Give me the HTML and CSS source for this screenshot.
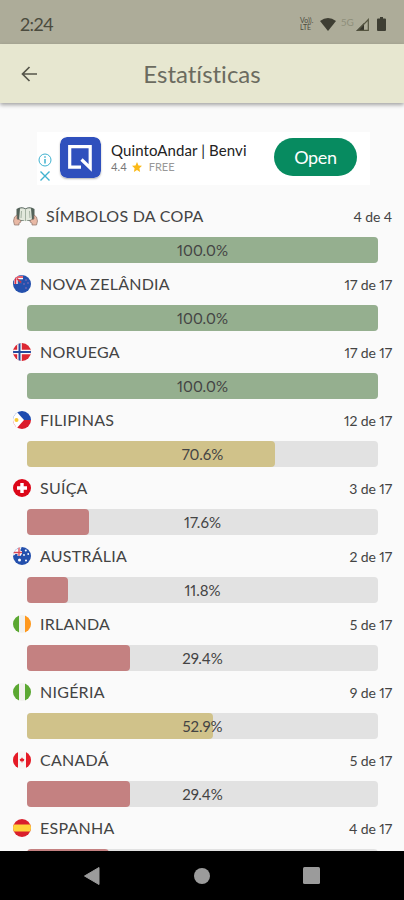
FILE: index.html
```
<!DOCTYPE html>
<html lang="pt-BR">
<head>
    <meta charset="UTF-8">
    <meta name="viewport" content="width=device-width, initial-scale=1.0">
    <title>Estatísticas</title>
    <link rel="stylesheet" href="styles.css">
</head>
<body>
    <!-- circle mask shared by all flags -->
    <svg class="defs" width="0" height="0" aria-hidden="true">
        <clipPath id="round"><circle cx="9" cy="9" r="9"/></clipPath>
    </svg>

    <div class="status-bar">
        <span class="clock">2:24</span>
        <div class="status-icons">
            <span class="volte">Vo)).<br>LTE</span>
            <svg class="wifi" width="16" height="13" viewBox="0 0 16 13"><path d="M0 3Q8 -3 16 3L8 13Z" fill="#3e3e33"/></svg>
            <span class="network">5G</span>
            <svg class="signal" width="13" height="13" viewBox="0 0 13 13"><path d="M0 13L8 5V13Z" fill="#34342b"/><path d="M2 12.3L12.3 1.5V12.3Z" fill="none" stroke="#54543f" stroke-width="1.2"/></svg>
            <svg class="battery" width="9" height="14" viewBox="0 0 9 14"><path d="M3 0H6V1.5H8Q9 1.5 9 2.5V13Q9 14 8 14H1Q0 14 0 13V2.5Q0 1.5 1 1.5H3Z" fill="#3e3e33"/></svg>
        </div>
    </div>

    <header class="app-bar">
        <svg class="back" width="18" height="18" viewBox="0 0 18 18"><path d="M17 9H2.5M9.5 2L2.5 9L9.5 16" fill="none" stroke="#55554a" stroke-width="1.7"/></svg>
        <h1>Estatísticas</h1>
    </header>

    <main>
        <div class="ad">
            <div class="ad-choices">
                <svg width="14" height="14" viewBox="0 0 14 14" fill="none" stroke="#3fb2d0"><circle cx="7" cy="7" r="6"/><path d="M7 6V10.5M7 3.2V4.7" stroke-width="1.5"/></svg>
                <svg width="12" height="12" viewBox="0 0 12 12" fill="none" stroke="#3fb2d0" stroke-width="1.4"><path d="M1.5 1.5L10.5 10.5M10.5 1.5L1.5 10.5"/></svg>
            </div>
            <svg class="ad-logo" width="41" height="41" viewBox="0 0 41 41">
                <rect width="41" height="41" rx="7" fill="#2f50bd"/>
                <path d="M21 30.2H9.7V9.7H30.2V31L21.5 22.5" fill="none" stroke="#fff" stroke-width="3.2"/>
            </svg>
            <div class="ad-text">
                <div class="ad-title">QuintoAndar | Benvi</div>
                <div class="ad-info">4.4 <svg width="10" height="10" viewBox="0 0 10 10"><path d="M5 0L6.5 3.4L10 3.8L7.4 6.2L8.1 10L5 8L1.9 10L2.6 6.2L0 3.8L3.5 3.4Z" fill="#fbb917"/></svg> <span>FREE</span></div>
            </div>
            <div class="ad-button">Open</div>
        </div>

        <div class="stats">
            <div class="item symbols">
                <div class="item-head">
                    <svg class="book" width="25" height="19" viewBox="0 0 25 19">
                        <path d="M3.5 2Q8 -1 12.5 1.5Q17 -1 21.5 2V14H3.5Z" fill="#536259"/>
                        <path d="M7 1.5Q10 .5 12.5 2.5V14.5Q10 12.5 6 13.5ZM18 1.5Q15 .5 12.5 2.5V14.5Q15 12.5 19 13.5Z" fill="#e2e8dc"/>
                        <path d="M12.5 2.5V14M8.5 4L8 11M16.5 4L17 11" stroke="#94a392" stroke-width=".8"/>
                        <path d="M1.5 10L4 8V12L7.5 13L8 15L6 16V18H1.5L.5 14ZM23.5 10L21 8V12L17.5 13L17 15L19 16V18H23.5L24.5 14Z" fill="#e9b9a5" stroke="#8b736a" stroke-width=".7"/>
                    </svg>
                    <span class="name">SÍMBOLOS DA COPA</span>
                    <span class="count">4 de 4</span>
                </div>
                <div class="bar"><div class="fill green" style="width: 100%"></div><span>100.0%</span></div>
            </div>

            <div class="item">
                <div class="item-head">
                    <svg class="flag" width="18" height="18" viewBox="0 0 18 18"><g clip-path="url(#round)"><path d="M0 0H18V18H0Z" fill="#2450ad"/><path d="M0 0H9V9H0Z" fill="#3459a9"/><path d="M3 9V2.5H10" fill="none" stroke="#fff" stroke-width="3.4"/><path d="M2.5 9V2H10M4 3.5L8 7.5" fill="none" stroke="#df3040" stroke-width="1.7"/><path d="M13 4V6M11 8V10M15 7V9M13 12V14" stroke="#8b6bae"/></g></svg>
                    <span class="name">NOVA ZELÂNDIA</span>
                    <span class="count">17 de 17</span>
                </div>
                <div class="bar"><div class="fill green" style="width: 100%"></div><span>100.0%</span></div>
            </div>

            <div class="item">
                <div class="item-head">
                    <svg class="flag" width="18" height="18" viewBox="0 0 18 18"><g clip-path="url(#round)"><path d="M0 0H18V18H0Z" fill="#dc2733"/><path d="M6.5 0V18M0 9H18" stroke="#fff" stroke-width="4.6"/><path d="M6.5 0V18M0 9H18" stroke="#254b9f" stroke-width="2"/></g></svg>
                    <span class="name">NORUEGA</span>
                    <span class="count">17 de 17</span>
                </div>
                <div class="bar"><div class="fill green" style="width: 100%"></div><span>100.0%</span></div>
            </div>

            <div class="item">
                <div class="item-head">
                    <svg class="flag" width="18" height="18" viewBox="0 0 18 18"><g clip-path="url(#round)"><path d="M0 0H18V9H0Z" fill="#1d4bb0"/><path d="M0 9H18V18H0Z" fill="#db1b2c"/><path d="M0 0H3L11 9L3 18H0Z" fill="#fff"/><circle cx="3.5" cy="9" r="2" fill="#f9c930"/></g></svg>
                    <span class="name">FILIPINAS</span>
                    <span class="count">12 de 17</span>
                </div>
                <div class="bar"><div class="fill yellow" style="width: 70.6%"></div><span>70.6%</span></div>
            </div>

            <div class="item">
                <div class="item-head">
                    <svg class="flag" width="18" height="18" viewBox="0 0 18 18"><circle cx="9" cy="9" r="9" fill="#dc0719"/><path d="M9 4V14M4 9H14" stroke="#fff" stroke-width="3.4"/></svg>
                    <span class="name">SUÍÇA</span>
                    <span class="count">3 de 17</span>
                </div>
                <div class="bar"><div class="fill red" style="width: 17.6%"></div><span>17.6%</span></div>
            </div>

            <div class="item">
                <div class="item-head">
                    <svg class="flag" width="18" height="18" viewBox="0 0 18 18"><g clip-path="url(#round)"><path d="M0 0H18V18H0Z" fill="#2450ad"/><path d="M0 0L8 8M0 8L8 0" stroke="#fff" stroke-width="2"/><path d="M6 0V9M0 5.5H9" stroke="#fff" stroke-width="3"/><path d="M6 0V9M0 5.5H9" stroke="#dc4652" stroke-width="1.3"/><g fill="#fff"><circle cx="6.5" cy="13" r="1.5"/><circle cx="12.8" cy="3.5" r="1"/><circle cx="11" cy="8" r=".9"/><circle cx="15.2" cy="7" r=".9"/><circle cx="13" cy="13.5" r="1"/></g></g></svg>
                    <span class="name">AUSTRÁLIA</span>
                    <span class="count">2 de 17</span>
                </div>
                <div class="bar"><div class="fill red" style="width: 11.8%"></div><span>11.8%</span></div>
            </div>

            <div class="item">
                <div class="item-head">
                    <svg class="flag" width="18" height="18" viewBox="0 0 18 18"><g clip-path="url(#round)"><path d="M0 0H18V18H0Z" fill="#f1f1ee"/><path d="M0 0H6V18H0Z" fill="#5ba832"/><path d="M12 0H18V18H12Z" fill="#ff981c"/></g></svg>
                    <span class="name">IRLANDA</span>
                    <span class="count">5 de 17</span>
                </div>
                <div class="bar"><div class="fill red" style="width: 29.4%"></div><span>29.4%</span></div>
            </div>

            <div class="item">
                <div class="item-head">
                    <svg class="flag" width="18" height="18" viewBox="0 0 18 18"><g clip-path="url(#round)"><path d="M0 0H18V18H0Z" fill="#f1f1ee"/><path d="M0 0H6V18H0ZM12 0H18V18H12Z" fill="#5ba832"/></g></svg>
                    <span class="name">NIGÉRIA</span>
                    <span class="count">9 de 17</span>
                </div>
                <div class="bar"><div class="fill yellow" style="width: 52.9%"></div><span>52.9%</span></div>
            </div>

            <div class="item">
                <div class="item-head">
                    <svg class="flag" width="18" height="18" viewBox="0 0 18 18"><g clip-path="url(#round)"><path d="M0 0H18V18H0Z" fill="#f8f5f4"/><path d="M0 0H5V18H0ZM13 0H18V18H13Z" fill="#e51b27"/><path d="M9 6.3L9.9 7.8L11.3 8L10.7 10.3H9.4V11.5H8.6V10.3H7.3L6.7 8L8.1 7.8Z" fill="#e51b27"/></g></svg>
                    <span class="name">CANADÁ</span>
                    <span class="count">5 de 17</span>
                </div>
                <div class="bar"><div class="fill red" style="width: 29.4%"></div><span>29.4%</span></div>
            </div>

            <div class="item">
                <div class="item-head">
                    <svg class="flag" width="18" height="18" viewBox="0 0 18 18"><g clip-path="url(#round)"><path d="M0 0H18V18H0Z" fill="#d9202d"/><path d="M0 5.5H18V12.5H0Z" fill="#ffd33b"/></g></svg>
                    <span class="name">ESPANHA</span>
                    <span class="count">4 de 17</span>
                </div>
                <div class="bar"><div class="fill red" style="width: 23.5%"></div></div>
            </div>
        </div>
    </main>

    <nav class="nav-bar">
        <svg width="16" height="18" viewBox="0 0 16 18"><path d="M15 .5V17.5L.5 9Z" fill="#9b9b9b" stroke="#9b9b9b" stroke-linejoin="round"/></svg>
        <svg width="16" height="16" viewBox="0 0 16 16"><circle cx="8" cy="8" r="8" fill="#9b9b9b"/></svg>
        <svg width="17" height="17" viewBox="0 0 17 17"><rect width="17" height="17" rx="1.5" fill="#9b9b9b"/></svg>
    </nav>
</body>
</html>
```
FILE: styles.css
```
* {
  box-sizing: border-box;
}

body {
  display: flex;
  flex-direction: column;
  height: 900px;
  margin: 0;
  overflow: hidden;
  background-color: #fafafa;
  font-family: Lato, "Liberation Sans", sans-serif;
  font-variant-ligatures: none;
  font-variant-numeric: proportional-nums;
  color: #444;
}

svg {
  display: block;
  flex: none;
}

.defs {
  position: absolute;
}

.status-bar {
  display: flex;
  flex: none;
  justify-content: space-between;
  align-items: center;
  height: 44px;
  padding: 4px 18px 0 20px;
  background-color: #adac99;
  color: #4b4b3e;
}

.clock {
  font-size: 18px;
  letter-spacing: -0.6px;
}

.status-icons {
  display: flex;
  align-items: center;
}

.volte {
  width: 20px;
  font-size: 7px;
  line-height: 7px;
}

.network {
  width: 15px;
  margin: -5px 0 0 5px;
  font-size: 10px;
  color: #8f8f7b;
}

.battery {
  margin-left: 8px;
}

.app-bar {
  display: flex;
  flex: none;
  align-items: center;
  height: 59px;
  padding: 0 20px;
  background-color: #e7e7d0;
  box-shadow: 0 2px 4px rgba(0, 0, 0, 0.35);
  z-index: 1;
}

.app-bar h1 {
  flex: 1;
  margin: 0 18px 0 0;
  font-size: 24px;
  font-weight: normal;
  text-align: center;
  color: #6b6b5f;
}

main {
  flex: 1;
  min-height: 0;
  overflow: hidden;
  padding-top: 29px;
}

.ad {
  display: flex;
  width: 333px;
  height: 53px;
  margin: 0 auto 10px 37px;
  background-color: #fff;
}

.ad-choices {
  display: flex;
  flex-direction: column;
  align-items: center;
  gap: 3px;
  width: 15px;
  padding-top: 21px;
}

.ad-logo {
  margin: 5px 0 0 8px;
  border-radius: 7px;
  box-shadow: 0 1px 2px rgba(0, 0, 0, 0.3);
}

.ad-text {
  width: 164px;
  padding: 9px 0 0 10px;
  white-space: nowrap;
}

.ad-title {
  font-size: 15px;
  line-height: 18px;
  letter-spacing: 0.1px;
  color: #222;
}

.ad-info {
  display: flex;
  align-items: center;
  gap: 5px;
  font-size: 11px;
  line-height: 16px;
  color: #777;
}

.ad-info span {
  margin-left: 2px;
  color: #999;
}

.ad-button {
  width: 83px;
  height: 38px;
  margin-top: 6px;
  margin-left: 9px;
  border-radius: 19px;
  background-color: #078b60;
  font-size: 18px;
  line-height: 38px;
  letter-spacing: -0.3px;
  text-align: center;
  color: #fff;
}

.item-head {
  display: flex;
  align-items: center;
  height: 42px;
  padding: 0 12px 0 13px;
}

.name {
  margin: 0 0 2px 9px;
  font-size: 16px;
  letter-spacing: 0.25px;
}

.symbols .name {
  margin-left: 8px;
}

.count {
  margin-left: auto;
  font-size: 14px;
  letter-spacing: -0.1px;
}

.bar {
  display: grid;
  width: 351px;
  height: 26px;
  margin-left: 27px;
  border-radius: 4px;
  background-color: #e2e2e2;
}

.fill,
.bar span {
  grid-area: 1 / 1;
}

.fill {
  border-radius: 4px;
}

.bar span {
  font-size: 15px;
  line-height: 26px;
  text-align: center;
}

.green {
  background-color: #95af8f;
}

.yellow {
  background-color: #d0c28a;
}

.red {
  background-color: #c48181;
}

.nav-bar {
  display: flex;
  flex: none;
  justify-content: space-between;
  align-items: center;
  height: 49px;
  padding: 0 84px;
  background-color: #000;
}
```
